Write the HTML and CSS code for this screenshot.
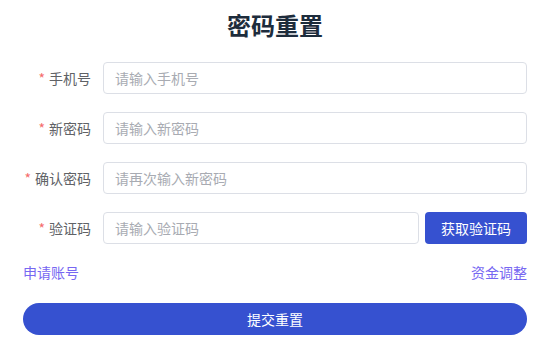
FILE: index.html
```html
<!DOCTYPE html>
<html lang="zh-CN">
<head>
    <meta charset="UTF-8">
    <title>密码重置</title>
    <link rel="stylesheet" href="styles.css">
</head>
<body>
    <div class="reset-box">
        <h2 class="title">密码重置</h2>
        <form class="reset-form">
            <div class="form-item">
                <label class="form-label"><span class="star">*</span>手机号</label>
                <div class="form-content">
                    <input class="form-input" type="text" placeholder="请输入手机号">
                </div>
            </div>
            <div class="form-item">
                <label class="form-label"><span class="star">*</span>新密码</label>
                <div class="form-content">
                    <input class="form-input" type="password" placeholder="请输入新密码">
                </div>
            </div>
            <div class="form-item">
                <label class="form-label"><span class="star">*</span>确认密码</label>
                <div class="form-content">
                    <input class="form-input" type="password" placeholder="请再次输入新密码">
                </div>
            </div>
            <div class="form-item">
                <label class="form-label"><span class="star">*</span>验证码</label>
                <div class="form-content code-row">
                    <input class="form-input" type="text" placeholder="请输入验证码">
                    <button class="code-btn" type="button">获取验证码</button>
                </div>
            </div>
            <div class="links">
                <a class="link">申请账号</a>
                <a class="link">资金调整</a>
            </div>
            <button class="submit-btn" type="button">提交重置</button>
        </form>
    </div>
</body>
</html>
```

FILE: styles.css
```css
body {
    margin: 0;
    background-color: #fff;
    font-family: "Noto Sans CJK SC", "Noto Sans", sans-serif;
}
.reset-box {
    padding: 0 23px;
}
.title {
    margin: 7px 0 20px;
    text-align: center;
    font-size: 24px;
    line-height: 35px;
    font-weight: bold;
    color: #1d2c3c;
}
.form-item {
    display: flex;
    align-items: center;
    margin-bottom: 18px;
}
.form-label {
    width: 80px;
    padding-right: 12px;
    box-sizing: border-box;
    text-align: right;
    font-size: 14px;
    color: #606266;
}
.star {
    color: #f56c6c;
    margin-right: 4px;
}
.form-content {
    flex: 1;
    display: flex;
}
.code-row {
    gap: 6px;
}
.form-input {
    flex: 1;
    min-width: 0;
    height: 32px;
    box-sizing: border-box;
    padding: 0 11px;
    border: 1px solid #dcdfe6;
    border-radius: 4px;
    font-family: inherit;
    font-size: 14px;
    color: #606266;
    outline: none;
}
.form-input::placeholder {
    color: #a8abb2;
}
.code-btn {
    width: 102px;
    height: 32px;
    border: none;
    border-radius: 4px;
    background-color: #3651d0;
    color: #fff;
    font-family: inherit;
    font-size: 14px;
    cursor: pointer;
}
.links {
    display: flex;
    justify-content: space-between;
    font-size: 14px;
    line-height: 20px;
    margin-bottom: 21px;
}
.link {
    color: #7767f2;
    cursor: pointer;
}
.submit-btn {
    display: block;
    width: 100%;
    height: 32px;
    border: none;
    border-radius: 16px;
    background-color: #3651d0;
    color: #fff;
    font-family: inherit;
    font-size: 14px;
    cursor: pointer;
}
```
